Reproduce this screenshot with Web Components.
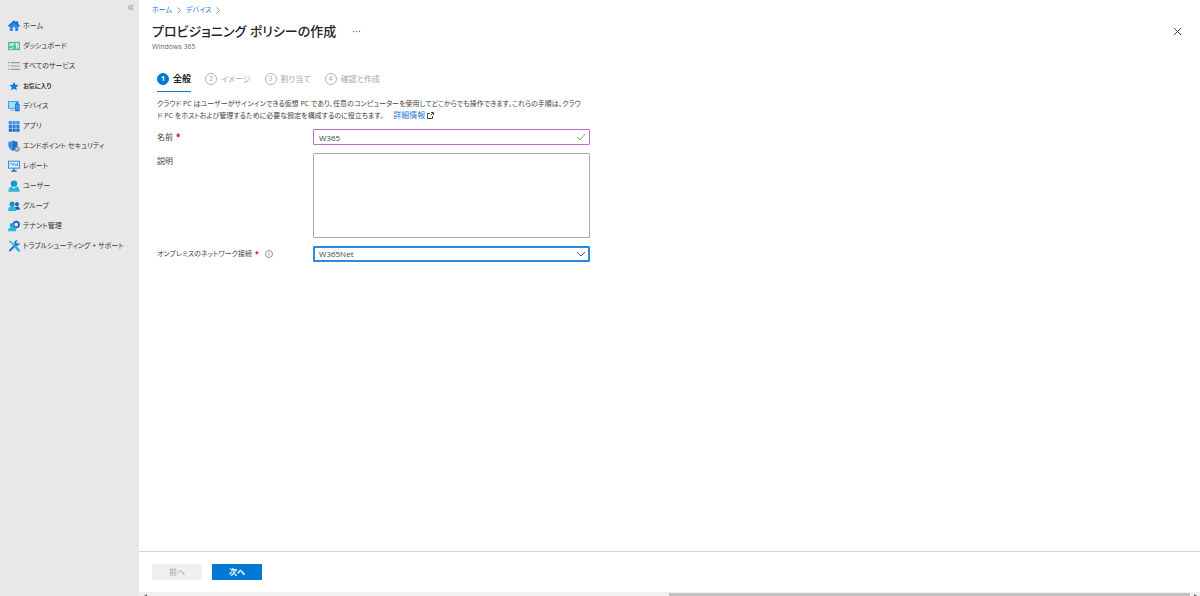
<!DOCTYPE html>
<html lang="ja">
<head>
<meta charset="utf-8">
<meta name="viewport" content="width=device-width, initial-scale=1">
<title>プロビジョニング ポリシーの作成</title>
<style>
    html, body {
        margin: 0;
        height: 100%;
    }
    body {
        font-family: "Open Sans", "Noto Sans CJK JP", sans-serif;
        font-feature-settings: "palt";
        font-size: 8px;
        line-height: 12px;
        color: #444;
        background: #fff;
        overflow: hidden;
    }
</style>
</head>
<body>
<portal-shell>
    <side-menu slot="menu">
        <menu-item icon="home">ホーム</menu-item>
        <menu-item icon="dashboard">ダッシュボード</menu-item>
        <menu-item icon="list">すべてのサービス</menu-item>
        <menu-item icon="star" heading>お気に入り</menu-item>
        <menu-item icon="devices">デバイス</menu-item>
        <menu-item icon="apps">アプリ</menu-item>
        <menu-item icon="shield">エンドポイント セキュリティ</menu-item>
        <menu-item icon="report">レポート</menu-item>
        <menu-item icon="user">ユーザー</menu-item>
        <menu-item icon="group">グループ</menu-item>
        <menu-item icon="tenant">テナント管理</menu-item>
        <menu-item icon="tools">トラブルシューティング + サポート</menu-item>
    </side-menu>
    <page-header subtitle="Windows 365">プロビジョニング ポリシーの作成</page-header>
    <wizard-steps>
        <wizard-step number="1" active>全般</wizard-step>
        <wizard-step number="2">イメージ</wizard-step>
        <wizard-step number="3">割り当て</wizard-step>
        <wizard-step number="4">確認と作成</wizard-step>
    </wizard-steps>
    <intro-text></intro-text>
    <form-field label="名前" type="text" value="W365" required></form-field>
    <form-field label="説明" type="area"></form-field>
    <form-field label="オンプレミスのネットワーク接続" type="select" value="W365Net" required info></form-field>
    <wizard-footer slot="footer"></wizard-footer>
    <scroll-track slot="footer"></scroll-track>
</portal-shell>

<script>
const icons = {
    home: `<path d="M2.400 7v7.800h4V9.500h3.200v5.300h4V7L8 2z" fill="#2f8bee"/><path d="M8 .4 0 7.700l1.300 1.500L8 3.200l6.700 6L16 7.700l-2.500-2.400V1.500H11v1.600z" fill="#1767c4"/>`,
    dashboard: `<path d="M0 2.500h16v11H0z" fill="#4fbf9f"/><path d="M1.500 4h7v3.500h-7zM10 4h4.500v3.500H10z" fill="#8edcc5"/><path d="m2 8 2-2 1.500 1L8 4.500M11.500 4v7.500M13.500 6v5.500M2 11.500h3M6.500 9v2.500" stroke="#fff" stroke-width="1.200" fill="none"/>`,
    list: `<path d="M0 3.500h2M0 8h2M0 12.500h2" stroke="#7fba3c" stroke-width="1.600"/><path d="M3.500 3.500H16M3.500 8H16M3.500 12.500H16" stroke="#9a9a9a" stroke-width="1.500"/>`,
    star: `<path d="m8 2.200 1.800 4 4.400.4-3.300 2.900 1 4.300L8 11.500l-3.900 2.300 1-4.300-3.300-2.900 4.400-.4z" fill="#0f78d4"/>`,
    devices: `<path d="M0 1.500h14v10H0z" fill="#2b8ae2"/><path d="M1 2.500h9.500v8H1z" fill="#9be3fb"/><path d="M3.500 13h5v1.500h-5z" fill="#6bb4ea"/><path d="M9.500 5h6v10h-6z" fill="#1a6fd0"/><path d="M10.500 6h4v7h-4z" fill="#3c9cf0"/>`,
    apps: `<path d="M1 1.300h4.300v4.300H1zM6 1.300h4.300v4.300H6zM11 1.300h4.300v4.300H11z" fill="#3b96ed"/><path d="M1 6.300h4.300v4.300H1zM6 6.300h4.300v4.300H6zM11 6.300h4.300v4.300H11z" fill="#287fdc"/><path d="M1 11.300h4.300v4.300H1zM6 11.300h4.300v4.300H6zM11 11.300h4.300v4.300H11z" fill="#186bc9"/>`,
    shield: `<path d="M6.500.5C4.500 2 2.500 2.300.5 2.400V7c0 4 3.500 6.300 6 7.500C9 13.300 12.500 11 12.500 7V2.400c-2-.1-4-.4-6-1.900z" fill="#3590ea"/><path d="M6.500.5v14C9 13.300 12.500 11 12.500 7V2.400c-2-.1-4-.4-6-1.900z" fill="#1b6fca"/><circle cx="12" cy="12" r="2.700" fill="#c9cdd2" stroke="#7c848c" stroke-width="1.600"/>`,
    report: `<path d="M0 1h16v10.500H0z" fill="#2683d8"/><path d="M1.200 2.200h13.600v8H1.200z" fill="#d5f0fc"/><path d="M2.500 5.500 5 4.500l2 2.500 2-3" stroke="#2683d8" stroke-width="1.200" fill="none"/><path d="M10.500 8V5.500M12.500 8V4" stroke="#2683d8" stroke-width="1.200"/><path d="M7 11.500h2V14h2.500v1.500h-7V14H7z" fill="#185ca8"/>`,
    user: `<path d="M.5 15.500c0-4.500 2-7 5.500-7h4c3.500 0 5.500 2.500 5.500 7z" fill="#28b5dc"/><path d="M5 8.500 8 12l3-3.500z" fill="#d6f4fb"/><circle cx="8" cy="4.800" r="4.300" fill="#1694d2"/>`,
    group: `<path d="M8.500 13c.3-3 1.500-4.500 3.500-4.500s4 1.500 4 4.500z" fill="#1562bd"/><circle cx="12" cy="5.500" r="2.700" fill="#1b73cc"/><path d="M0 14.500C0 11 1.700 8.800 4.500 8.800h2c3 0 4.500 2.200 4.500 5.700z" fill="#27b6dc"/><circle cx="5.500" cy="5.500" r="3.400" fill="#1893d0"/>`,
    tenant: `<circle cx="11" cy="6" r="3.600" fill="none" stroke="#1766c6" stroke-width="2.200"/><path d="M11 .6v2M11 9.400v2M5.800 6h2M14.200 6h2M7.300 2.300l1.300 1.300M14.700 2.300l-1.300 1.300M14.700 9.700l-1.300-1.300" stroke="#1766c6" stroke-width="1.600"/><path d="M0 15c0-3.500 1.700-5.200 4.500-5.200h2c3 0 4.500 1.700 4.500 5.200z" fill="#27b6dc"/><circle cx="5.500" cy="7" r="3" fill="#1a9bd5"/>`,
    tools: `<path d="m2.500 14 9-9" stroke="#1b75cf" stroke-width="2.500" stroke-linecap="round"/><path d="M15.500 3.200 13 5.500l-2-.5-.5-2L13 .6c-2.500-.6-4.800 1-4.700 3.500C8.400 6.500 11 8.500 13.500 7.300c1.500-.7 2.300-2.500 2-4.100z" fill="#1b75cf"/><path d="m1.500 1.500 3 1.500 9.500 10" stroke="#25aee0" stroke-width="2" fill="none"/><path d="m10.500 9.500 4 4.500" stroke="#25aee0" stroke-width="3.200" stroke-linecap="round"/>`
};

// attaches an open shadow root filled from a template string
function render(el, html) {
    const template = document.createElement('template');
    template.innerHTML = html;
    el.attachShadow({mode: 'open'}).appendChild(template.content.cloneNode(true));
}

class PortalShell extends HTMLElement {
    connectedCallback() {
        render(this, `
            <style>
            :host {
                display: grid;
                grid-template-columns: 139px minmax(0, 1fr);
                height: 100vh;
            }
            .page {
                display: flex;
                flex-direction: column;
                min-height: 0;
            }
            main {
                flex: 1;
                min-height: 0;
                padding: 4px 16px 0 13px;
            }
            </style>
            <slot name="menu"></slot>
            <div class="page">
                <main><slot></slot></main>
                <slot name="footer"></slot>
            </div>
        `);
    }
}

class SideMenu extends HTMLElement {
    connectedCallback() {
        render(this, `
            <style>
            :host {
                display: block;
                background: #e8e8e8;
            }
            .top {
                display: flex;
                justify-content: flex-end;
                height: 16px;
                padding-right: 5px;
            }
            button {
                width: 7px;
                height: 15px;
                padding: 0;
                border: 0;
                background: none;
            }
            svg {
                display: block;
                width: 7px;
                height: 7px;
            }
            nav {
                display: flex;
                flex-direction: column;
            }
            </style>
            <div class="top">
                <button type="button" aria-label="メニューを折りたたむ">
                    <svg viewBox="0 0 8 8" fill="none" stroke="#777" stroke-width="1"><path d="M4 1 1.500 4 4 7M7 1 4.500 4 7 7"/></svg>
                </button>
            </div>
            <nav><slot></slot></nav>
        `);
    }
}

class MenuItem extends HTMLElement {
    connectedCallback() {
        render(this, `
            <style>
            :host {
                display: block;
            }
            a {
                display: flex;
                align-items: center;
                gap: 3px;
                height: 20px;
                padding-left: 8px;
                font-size: 7px;
                color: #333;
                text-decoration: none;
                white-space: nowrap;
            }
            :host([heading]) a {
                font-size: 6px;
                font-weight: 600;
            }
            svg {
                flex: none;
                width: 12px;
                height: 12px;
            }
            </style>
            <a href="#"><svg viewBox="0 0 16 16">${icons[this.getAttribute('icon')]}</svg><span><slot></slot></span></a>
        `);
    }
}

class PageHeader extends HTMLElement {
    connectedCallback() {
        render(this, `
            <style>
            :host {
                display: block;
            }
            .crumbs {
                display: flex;
                align-items: center;
                gap: 5px;
                font-size: 7px;
            }
            .crumbs a {
                color: #1a7ad4;
                text-decoration: none;
            }
            .crumbs svg {
                width: 4px;
                height: 7px;
            }
            .row {
                display: flex;
                align-items: center;
                height: 24px;
                margin-top: 3px;
            }
            h1 {
                margin: 0;
                font-size: 13px;
                line-height: 20px;
                font-weight: 500;
                color: #222;
            }
            button {
                display: flex;
                padding: 0;
                border: 0;
                background: none;
            }
            .more {
                margin-left: 16px;
            }
            .close {
                margin-left: auto;
                margin-right: 2px;
            }
            p {
                margin: 0;
                font-size: 7px;
                line-height: 8px;
                color: #666;
            }
            </style>
            <nav class="crumbs">
                <a href="#">ホーム</a>
                <svg viewBox="0 0 4 7" fill="none" stroke="#999"><path d="m.5.5 3 3-3 3"/></svg>
                <a href="#">デバイス</a>
                <svg viewBox="0 0 4 7" fill="none" stroke="#999"><path d="m.5.5 3 3-3 3"/></svg>
            </nav>
            <div class="row">
                <h1><slot></slot></h1>
                <button class="more" type="button" aria-label="その他">
                    <svg width="9" height="3" viewBox="0 0 9 3" fill="#666"><circle cx="1.500" cy="1.500" r=".7"/><circle cx="4.500" cy="1.500" r=".7"/><circle cx="7.500" cy="1.500" r=".7"/></svg>
                </button>
                <button class="close" type="button" aria-label="閉じる">
                    <svg width="9" height="9" viewBox="0 0 9 9" stroke="#444"><path d="m1 1 7 7M8 1 1 8"/></svg>
                </button>
            </div>
            <p>${this.getAttribute('subtitle')}</p>
        `);
    }
}

class WizardSteps extends HTMLElement {
    connectedCallback() {
        render(this, `
            <style>
            :host {
                display: flex;
                gap: 14px;
                margin: 20px 0 0 5px;
            }
            </style>
            <slot></slot>
        `);
    }
}

class WizardStep extends HTMLElement {
    connectedCallback() {
        render(this, `
            <style>
            :host {
                display: block;
            }
            button {
                display: flex;
                align-items: center;
                gap: 4px;
                height: 21px;
                padding: 0 0 4px;
                border: 0;
                border-bottom: 1px solid transparent;
                background: none;
                font: inherit;
                font-feature-settings: inherit;
                color: #a6a6a6;
                white-space: nowrap;
            }
            i {
                box-sizing: border-box;
                width: 12px;
                height: 12px;
                border: 1px solid #b4b4b4;
                border-radius: 50%;
                font-size: 7px;
                line-height: 10px;
                font-style: normal;
                text-align: center;
            }
            :host([active]) button {
                border-color: #0078d4;
                font-size: 9px;
                color: #222;
                font-weight: 700;
            }
            :host([active]) i {
                border-color: #0078d4;
                background: #0078d4;
                color: #fff;
            }
            </style>
            <button type="button"><i>${this.getAttribute('number')}</i><span><slot></slot></span></button>
        `);
    }
}

class IntroText extends HTMLElement {
    connectedCallback() {
        render(this, `
            <style>
            :host {
                display: block;
                margin: 6px 0 8px 5px;
            }
            p {
                margin: 0;
                font-size: 7px;
                line-height: 11px;
                white-space: nowrap;
            }
            a {
                margin-left: 8px;
                font-size: 8px;
                color: #0f78d4;
                text-decoration: none;
            }
            svg {
                width: 7px;
                height: 7px;
                vertical-align: -1px;
            }
            </style>
            <p>クラウド PC はユーザーがサインインできる仮想 PC であり、任意のコンピューターを使用してどこからでも操作できます。これらの手順は、クラウ<br>ド PC をホストおよび管理するために必要な設定を構成するのに役立ちます。 <a href="#">詳細情報 <svg viewBox="0 0 7 7" fill="none" stroke="#444"><path d="M3 1.500H.5v5h5V4M4 .5h2.500V3M6.500.5l-3 3"/></svg></a></p>
        `);
    }
}

class FormField extends HTMLElement {
    getControl() {
        const value = this.getAttribute('value') || '';
        const type = this.getAttribute('type');
        if (type === 'area') {
            return `<textarea id="control"></textarea>`;
        }
        if (type === 'select') {
            return `
                <select id="control"><option>${value}</option></select>
                <svg class="mark" viewBox="0 0 10 8" fill="none" stroke="#555"><path d="m1 2 4 4 4-4"/></svg>
            `;
        }
        return `
            <input id="control" type="text" value="${value}">
            <svg class="mark" viewBox="0 0 10 8" fill="none" stroke="#7cba3f"><path d="m1 4 3 3 5-6"/></svg>
        `;
    }
    connectedCallback() {
        render(this, `
            <style>
            :host {
                display: grid;
                grid-template-columns: 156px minmax(0, 277px);
                align-items: start;
                margin: 0 0 8px 5px;
            }
            .label {
                display: flex;
                align-items: center;
                gap: 3px;
                height: 16px;
                white-space: nowrap;
            }
            :host([info]) .label {
                font-size: 7px;
            }
            .required {
                font-weight: 700;
                color: #c50f1f;
            }
            .info {
                display: flex;
                margin-left: 3px;
                padding: 0;
                border: 0;
                background: none;
            }
            .control {
                display: grid;
                align-items: center;
            }
            .control > * {
                grid-area: 1 / 1;
            }
            input, select, textarea {
                box-sizing: border-box;
                width: 100%;
                height: 16px;
                margin: 0;
                padding: 0 5px;
                border: 1px solid #a9a9a9;
                border-radius: 1px;
                outline: 0;
                background: #fff;
                font: inherit;
                color: #444;
            }
            input {
                border-color: #b56fce;
            }
            select {
                appearance: none;
                padding: 0 4px;
                border: 2px solid #2b8be0;
            }
            textarea {
                display: block;
                height: 85px;
                resize: none;
            }
            .mark {
                justify-self: end;
                width: 10px;
                height: 8px;
                margin-right: 4px;
                pointer-events: none;
            }
            </style>
            <div class="label">
                <label for="control">${this.getAttribute('label')}</label>
                ${this.hasAttribute('required') ? '<span class="required">*</span>' : ''}
                ${this.hasAttribute('info') ? '<button class="info" type="button" aria-label="情報"><svg width="8" height="8" viewBox="0 0 8 8" fill="none" stroke="#777" stroke-width=".8"><circle cx="4" cy="4" r="3.500"/><path d="M4 3.500v2.300M4 2v.8"/></svg></button>' : ''}
            </div>
            <div class="control">${this.getControl()}</div>
        `);
    }
}

class WizardFooter extends HTMLElement {
    connectedCallback() {
        render(this, `
            <style>
            :host {
                display: flex;
                gap: 10px;
                padding: 12px 13px;
                border-top: 1px solid #d6d6d6;
            }
            button {
                width: 50px;
                height: 16px;
                padding: 0;
                border: 0;
                border-radius: 1px;
                background: #0078d4;
                font: inherit;
                font-weight: 600;
                font-feature-settings: inherit;
                color: #fff;
            }
            button:disabled {
                background: #f1f0ef;
                font-weight: 400;
                color: #a19f9d;
            }
            </style>
            <button type="button" disabled>前へ</button>
            <button type="button">次へ</button>
        `);
    }
}

class ScrollTrack extends HTMLElement {
    connectedCallback() {
        render(this, `
            <style>
            :host {
                display: grid;
                grid-template-columns: 1fr 521px 10px;
                height: 4px;
                background: #f1f1f1;
            }
            svg {
                width: 4px;
                height: 2px;
                margin: 2px 0 0 4px;
            }
            .thumb {
                margin-top: 1px;
                background: #c1c1c1;
            }
            </style>
            <svg viewBox="0 0 4 2"><path d="M4 0v2H1z" fill="#666"/></svg>
            <div class="thumb"></div>
            <svg viewBox="0 0 4 2"><path d="M0 0v2h3z" fill="#666"/></svg>
        `);
    }
}

customElements.define('portal-shell', PortalShell);
customElements.define('side-menu', SideMenu);
customElements.define('menu-item', MenuItem);
customElements.define('page-header', PageHeader);
customElements.define('wizard-steps', WizardSteps);
customElements.define('wizard-step', WizardStep);
customElements.define('intro-text', IntroText);
customElements.define('form-field', FormField);
customElements.define('wizard-footer', WizardFooter);
customElements.define('scroll-track', ScrollTrack);
</script>
</body>
</html>
